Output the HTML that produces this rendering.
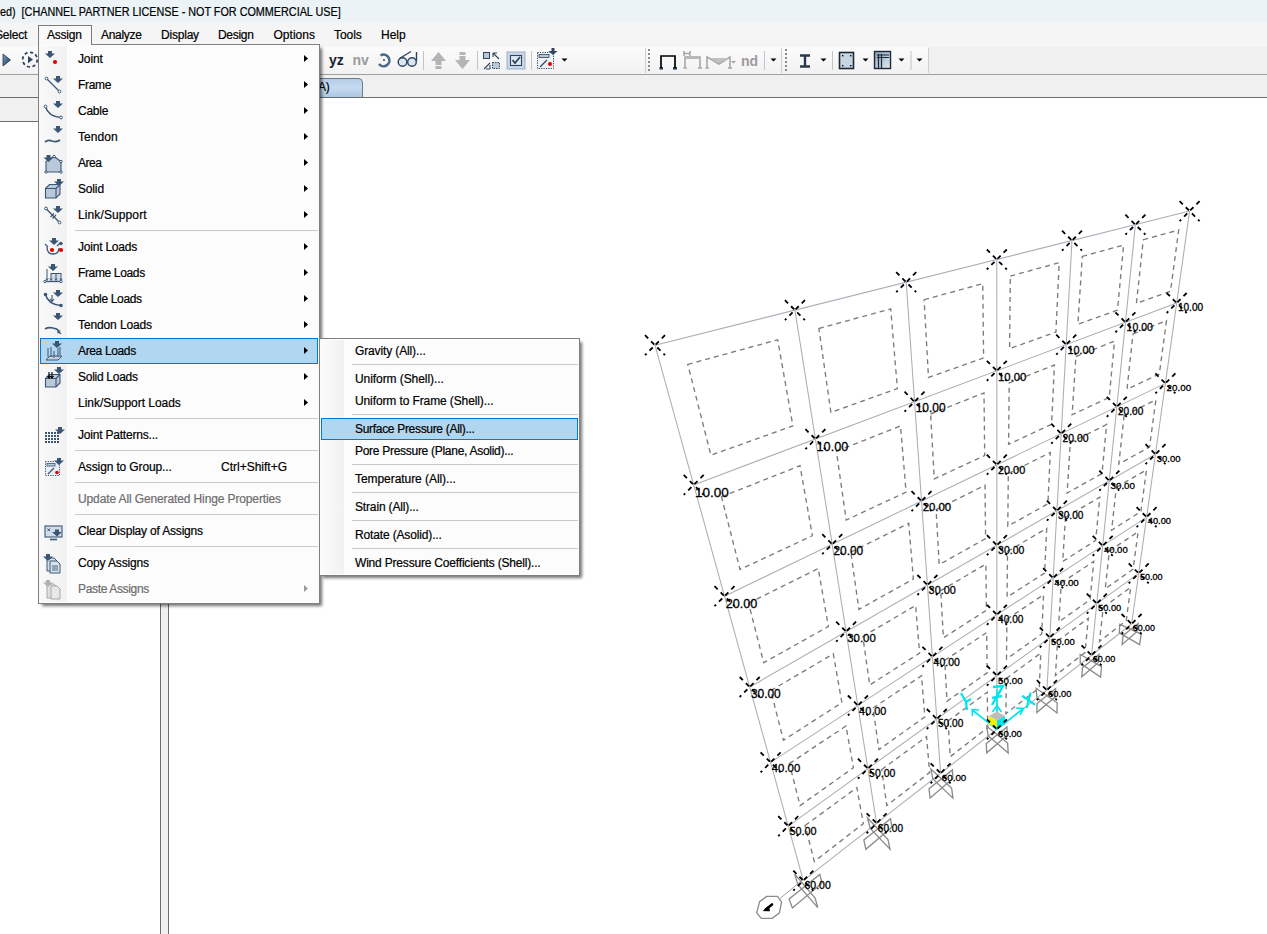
<!DOCTYPE html><html><head><meta charset="utf-8"><style>
*{box-sizing:border-box}
html,body{margin:0;padding:0}
body{width:1267px;height:934px;overflow:hidden;position:relative;background:#fff;font-family:"Liberation Sans",sans-serif;font-size:12px;color:#000}
.a{position:absolute}
.t{position:absolute;white-space:nowrap;line-height:14px;-webkit-text-stroke:0.2px currentColor;letter-spacing:-0.2px}
</style></head><body>
<div class="a" style="left:0;top:0;width:1267px;height:23px;background:#ebf3f7"></div>
<div class="t" style="left:0px;top:5px;font-size:12px;letter-spacing:0;transform:scaleX(0.9);transform-origin:0 0">ed)&nbsp;&nbsp;[CHANNEL PARTNER LICENSE - NOT FOR COMMERCIAL USE]</div>
<div class="a" style="left:0;top:23px;width:1267px;height:24px;background:#f5f5f5"></div>
<div class="t" style="left:-5px;top:28px;letter-spacing:-0.2px">Select</div>
<div class="t" style="left:101px;top:28px;letter-spacing:-0.286px">Analyze</div>
<div class="t" style="left:161px;top:28px;letter-spacing:-0.208px">Display</div>
<div class="t" style="left:218px;top:28px;letter-spacing:-0.293px">Design</div>
<div class="t" style="left:273.5px;top:28px;letter-spacing:0.02px">Options</div>
<div class="t" style="left:334px;top:28px;letter-spacing:-0.043px">Tools</div>
<div class="t" style="left:381px;top:28px;letter-spacing:-0.022px">Help</div>
<div class="a" style="left:38px;top:25px;width:54px;height:21px;background:#f9f9f9;border:1px solid #7a7a7a;border-bottom:none"></div>
<div class="t" style="left:47px;top:28px;letter-spacing:-0.222px">Assign</div>
<svg class="a" style="left:0;top:0;overflow:visible" width="1267" height="80">
<defs><linearGradient id="tg" x1="0" y1="0" x2="0" y2="1"><stop offset="0" stop-color="#fbfbfb"/><stop offset="1" stop-color="#f2f2f2"/></linearGradient><linearGradient id="bl" x1="0" y1="0" x2="1" y2="1"><stop offset="0" stop-color="#7d9ec0"/><stop offset="1" stop-color="#1e3552"/></linearGradient></defs>
<rect x="0" y="47" width="1267" height="27" fill="#f0f0f0"/>
<rect x="0" y="47" width="645" height="27" fill="url(#tg)"/><rect x="645" y="48" width="1" height="25" fill="#cfcfcf"/>
<rect x="646" y="47" width="135" height="27" fill="url(#tg)"/><rect x="781" y="48" width="1" height="25" fill="#cfcfcf"/>
<rect x="782" y="47" width="146" height="27" fill="url(#tg)"/><rect x="928" y="48" width="1" height="25" fill="#cfcfcf"/>
<rect x="648" y="49" width="2" height="2" fill="#8a8a8a"/><rect x="648" y="53" width="2" height="2" fill="#8a8a8a"/><rect x="648" y="57" width="2" height="2" fill="#8a8a8a"/><rect x="648" y="61" width="2" height="2" fill="#8a8a8a"/><rect x="648" y="65" width="2" height="2" fill="#8a8a8a"/><rect x="648" y="69" width="2" height="2" fill="#8a8a8a"/><rect x="785" y="49" width="2" height="2" fill="#8a8a8a"/><rect x="785" y="53" width="2" height="2" fill="#8a8a8a"/><rect x="785" y="57" width="2" height="2" fill="#8a8a8a"/><rect x="785" y="61" width="2" height="2" fill="#8a8a8a"/><rect x="785" y="65" width="2" height="2" fill="#8a8a8a"/><rect x="785" y="69" width="2" height="2" fill="#8a8a8a"/>
<path d="M3,54L10.5,60L3,66Z" fill="url(#bl)" stroke="#1e3552" stroke-width=".8"/>
<circle cx="30" cy="59.6" r="7.3" fill="none" stroke="#2f4560" stroke-width="1.8" stroke-dasharray="3.2 2.5"/><path d="M28,56L33,59.6L28,63.3Z" fill="#2f4560"/>
<text x="329" y="65" font-family="Liberation Sans" font-weight="bold" font-size="14" fill="#14222f">yz</text>
<text x="352.5" y="65" font-family="Liberation Sans" font-weight="bold" font-size="14" fill="#9a9a9a">nv</text>
<path d="M380.5,55.5 A5.8,5.8 0 1 1 379,64" fill="none" stroke="#4a6888" stroke-width="2.6"/><circle cx="384" cy="60" r="1" fill="#2f4560"/>
<circle cx="402.5" cy="62" r="4.3" fill="#dbe6f0" stroke="#2f4560" stroke-width="1.4"/><circle cx="412" cy="62" r="4.3" fill="#dbe6f0" stroke="#2f4560" stroke-width="1.4"/><path d="M399.5,58.5L411,51.5M416.5,52V61" stroke="#2f4560" stroke-width="1.4" fill="none"/>
<rect x="423" y="51" width="1" height="19" fill="#c4c4c4"/>
<path d="M431,61L438.5,52L446,61H441.5V65H435.5V61Z" fill="#b4b4b4"/><rect x="435.5" y="66" width="6" height="3" fill="#b4b4b4"/>
<path d="M455,60L462.5,69L470,60H465.5V56H459.5V60Z" fill="#b4b4b4"/><rect x="459.5" y="52" width="6" height="3" fill="#b4b4b4"/>
<rect x="477" y="51" width="1" height="19" fill="#c4c4c4"/>
<rect x="483.5" y="52.5" width="6" height="6" fill="#b8c8d8" stroke="#2f4560" stroke-width="1"/><rect x="492.5" y="62.5" width="7" height="6" fill="#b8c8d8" stroke="#2f4560" stroke-width="1" stroke-dasharray="1.5 1"/><path d="M493,53L499,59M493,53h4M493,53v4M484,69L490,63M490,69v-4M490,69h-4" stroke="#2f4560" stroke-width="1.1" fill="none"/>
<rect x="507" y="52" width="18" height="17" fill="#c9d9e8" stroke="#9ab0c6" stroke-width="1"/><rect x="510.5" y="55.5" width="11" height="10" fill="#dfe8f0" stroke="#2f4560" stroke-width="1.1"/><path d="M512.5,60L515,63L520,57" stroke="#2f4560" stroke-width="1.8" fill="none"/>
<rect x="531" y="51" width="1" height="19" fill="#c4c4c4"/>
<rect x="537.5" y="52.5" width="16" height="16" fill="#eef2f6" stroke="#2f4560" stroke-width="1" stroke-dasharray="1.2 1.2"/><rect x="539" y="54.5" width="10" height="3" fill="#b8c8d8" stroke="#2f4560" stroke-width=".8"/><path d="M540,67L547,60" stroke="#2f4560" stroke-width="1.3"/><circle cx="550" cy="64" r="2" fill="#e00000"/><path d="M551.5,48h3v3h3l-4.5,4l-4.5,-4h3z" fill="#2f4560"/>
<path d="M561.5,58.5h6l-3,3z" fill="#000"/>
<path d="M661,68V56H675V68M659.5,68H663M673,68H677" stroke="#000" stroke-width="1.7" fill="none"/><path d="M659.5,69.5H663M673,69.5H677" stroke="#5a8ac0" stroke-width="1"/>
<path d="M685,68V57H700V68M683.5,68H687M698,68H702M684,51V56M684,53.5H690M690,51V56" stroke="#a8a8a8" stroke-width="1.6" fill="none"/><rect x="685" y="56" width="15" height="3" fill="#b8b8b8"/>
<path d="M707,68V57L719,64L730,57V68M705.5,68H709M728,68H732" stroke="#a8a8a8" stroke-width="1.6" fill="none"/><path d="M709,58L719,63L729,58Z" fill="#c0c0c0"/><path d="M731,61h5l-2.5,2.5z" fill="#a0a0a0"/>
<text x="741" y="65.5" font-family="Liberation Sans" font-weight="bold" font-size="14" fill="#9c9c9c">nd</text>
<rect x="764" y="51" width="1" height="19" fill="#c4c4c4"/><path d="M770.5,58.5h6l-3,3z" fill="#000"/>
<path d="M800,55.5H810M805,55.5V66.5M800,66.5H810" stroke="#2a3a4c" stroke-width="2.4" fill="none"/>
<path d="M820.5,58.5h6l-3,3z" fill="#000"/><rect x="832" y="51" width="1" height="19" fill="#c4c4c4"/>
<rect x="839.5" y="52.5" width="14" height="16" fill="#c8d6e4" stroke="#1c2a38" stroke-width="1.6"/><rect x="842" y="55" width="1.4" height="1.4" fill="#000"/><rect x="850" y="55" width="1.4" height="1.4" fill="#000"/><rect x="842" y="65" width="1.4" height="1.4" fill="#000"/><rect x="850" y="65" width="1.4" height="1.4" fill="#000"/>
<path d="M862.5,58.5h6l-3,3z" fill="#000"/>
<defs><linearGradient id="gg" x1="0" y1="0" x2="1" y2="1"><stop offset="0" stop-color="#8aa0b6"/><stop offset="1" stop-color="#e4ebf2"/></linearGradient></defs><rect x="874.5" y="51.5" width="16" height="17" fill="url(#gg)" stroke="#1c2a38" stroke-width="1.4"/><path d="M877,55H889M877,57.5H889M878.5,54V68M881.5,54V68" stroke="#1c2a38" stroke-width="1.2" fill="none"/>
<path d="M898.5,58.5h6l-3,3z" fill="#000"/><rect x="910.5" y="51" width="1" height="19" fill="#c4c4c4"/><path d="M916.5,58.5h6l-3,3z" fill="#000"/>
</svg>
<div class="a" style="left:0;top:74px;width:1267px;height:1px;background:#a0a0a0"></div>
<div class="a" style="left:0;top:75px;width:1267px;height:22px;background:#f0f0f0"></div>
<div class="a" style="left:200px;top:78px;width:163px;height:20px;background:linear-gradient(#b4cde6,#c6dbef 45%,#a9c5e2);border:1px solid #6d7d8d;border-bottom:none;border-top-right-radius:5px"></div>
<div class="t" style="left:318px;top:80px">A)</div>
<div class="a" style="left:0;top:97px;width:1267px;height:1px;background:#6d6d6d"></div>
<div class="a" style="left:0;top:98px;width:160px;height:23px;background:#f0f0f0"></div>
<div class="a" style="left:0;top:121px;width:160px;height:1px;background:#6d6d6d"></div>
<div class="a" style="left:160px;top:98px;width:9px;height:836px;background:#f0f0f0;border-left:1px solid #6d6d6d;border-right:1px solid #6d6d6d"></div>
<svg width="1267" height="934" style="position:absolute;left:0;top:0">
<g stroke="#aaaeb6" stroke-width="1.05" fill="none"><polyline points="655.0,345.2 1189.6,211.1"/><polyline points="693.7,484.9 1176.7,303.0"/><polyline points="724.5,596.2 1165.4,383.4"/><polyline points="749.7,687.0 1155.5,454.2"/><polyline points="770.6,762.4 1146.6,517.1"/><polyline points="788.2,826.1 1138.7,573.4"/><polyline points="803.3,880.6 1131.6,624.0"/><polyline points="655.0,345.2 803.3,880.6"/><polyline points="794.9,310.1 876.6,823.3"/><polyline points="906.2,282.2 940.6,773.3"/><polyline points="996.8,259.5 996.9,729.3"/><polyline points="1072.0,240.6 1046.9,690.2"/><polyline points="1135.4,224.7 1091.5,655.3"/><polyline points="1189.6,211.1 1131.6,624.0"/></g>
<line x1="803" y1="879.5" x2="780.3" y2="898.3" stroke="#a0a0a0" stroke-width="1"/>
<g stroke="#7c7c7c" stroke-width="1.35" fill="none" stroke-dasharray="5 4"><polygon points="687.8,364.4 777.7,339.8 792.9,425.9 710.9,455.2"/><polygon points="721.5,496.8 800.0,465.7 812.4,535.7 740.0,569.5"/><polygon points="748.6,603.2 818.2,568.5 828.4,626.5 763.7,662.7"/><polygon points="770.8,690.6 833.3,653.9 841.9,702.7 783.4,740.2"/><polygon points="789.4,763.6 846.0,726.0 853.4,767.7 800.1,805.6"/><polygon points="805.1,825.5 856.9,787.6 863.3,823.7 814.3,861.5"/><polygon points="818.9,328.5 890.7,308.9 897.4,388.6 830.9,412.4"/><polygon points="836.4,451.3 900.5,425.9 906.1,492.1 846.2,520.0"/><polygon points="850.8,552.2 908.7,523.3 913.4,579.0 858.9,609.4"/><polygon points="862.8,636.5 915.6,605.5 919.6,653.1 869.7,685.0"/><polygon points="873.0,708.0 921.5,675.8 924.9,716.9 878.9,749.6"/><polygon points="881.7,769.5 926.6,736.7 929.6,772.6 886.8,805.5"/><polygon points="924.1,299.7 982.8,283.6 983.6,357.9 928.5,377.5"/><polygon points="930.6,414.0 984.0,392.9 984.7,455.5 934.3,478.9"/><polygon points="936.1,509.6 985.0,485.2 985.6,538.6 939.2,564.6"/><polygon points="940.7,590.7 985.9,564.1 986.4,610.3 943.4,637.8"/><polygon points="944.7,660.4 986.7,632.5 987.1,672.8 947.0,701.2"/><polygon points="948.1,720.9 987.3,692.2 987.7,727.7 950.2,756.7"/><polygon points="1010.3,276.1 1059.2,262.7 1055.9,332.1 1009.6,348.6"/><polygon points="1009.2,382.9 1054.4,365.0 1051.6,424.3 1008.6,444.3"/><polygon points="1008.3,473.5 1050.3,452.6 1047.9,503.8 1007.8,526.2"/><polygon points="1007.5,551.4 1046.7,528.4 1044.6,573.1 1007.1,597.1"/><polygon points="1006.9,619.1 1043.6,594.7 1041.7,634.0 1006.5,659.0"/><polygon points="1006.3,678.4 1040.8,653.1 1039.2,688.0 1005.9,713.6"/><polygon points="1082.3,256.4 1123.6,245.1 1117.5,310.1 1077.9,324.2"/><polygon points="1075.9,356.5 1114.5,341.2 1109.2,397.5 1072.1,414.7"/><polygon points="1070.3,442.6 1106.6,424.5 1102.0,473.5 1067.1,493.1"/><polygon points="1065.5,517.3 1099.8,497.2 1095.7,540.4 1062.7,561.5"/><polygon points="1061.3,582.9 1093.7,561.4 1090.1,599.7 1058.8,621.9"/><polygon points="1057.6,640.8 1088.3,618.3 1085.0,652.6 1055.4,675.5"/><polygon points="1143.3,239.7 1178.7,230.0 1170.5,291.2 1136.4,303.4"/><polygon points="1133.0,333.9 1166.5,320.6 1159.3,374.1 1127.0,389.2"/><polygon points="1124.1,415.7 1155.9,399.9 1149.5,447.0 1118.8,464.1"/><polygon points="1116.3,487.5 1146.5,469.8 1140.9,511.5 1111.6,530.2"/><polygon points="1109.4,550.9 1138.1,531.8 1133.1,569.1 1105.2,588.9"/><polygon points="1103.2,607.4 1130.7,587.3 1126.2,620.8 1099.5,641.4"/></g>
<g stroke="#8a8a8a" stroke-width="1.3" fill="none"><polygon points="789.1,898.9 819.8,874.4 822.0,883.0 792.4,908.0"/><polygon points="794.7,874.2 815.1,898.0 817.8,907.6 797.9,884.6"/><polygon points="863.8,840.0 890.6,818.7 891.8,827.3 865.9,849.2"/><polygon points="867.5,818.0 888.0,839.5 890.0,849.2 870.1,828.1"/><polygon points="929.0,788.7 952.4,769.9 952.9,778.5 930.1,798.0"/><polygon points="930.9,769.1 951.7,788.3 952.9,798.1 932.9,778.9"/><polygon points="986.3,743.5 1007.0,726.9 1007.0,735.4 986.7,752.8"/><polygon points="986.7,726.2 1007.6,743.1 1008.2,753.1 988.1,735.7"/><polygon points="1037.1,703.5 1055.6,688.6 1055.0,697.1 1036.9,712.6"/><polygon points="1036.1,688.3 1057.2,702.8 1057.0,712.9 1036.9,697.4"/><polygon points="1082.4,667.7 1099.0,654.4 1098.1,662.7 1081.8,676.8"/><polygon points="1080.2,654.5 1101.5,666.7 1100.6,677.0 1080.3,663.3"/><polygon points="1123.1,635.6 1138.1,623.6 1136.9,631.7 1122.1,644.5"/><polygon points="1119.8,624.3 1141.2,634.2 1139.6,644.6 1119.3,632.8"/></g>
<path d="M996.9,729.3 L997,689 M996.9,729.3 L1022,709.5 M996.9,729.3 L972.2,710" stroke="#00e5f0" stroke-width="1.6" fill="none"/><path d="M992.5,712 L997,705.5 L1001.5,712 M1016,708 L1023.5,708.5 L1020,715 M972.5,716 L972.2,709.5 L979,710" stroke="#00e5f0" stroke-width="1.6" fill="none"/><path d="M993,687 L1003,686 L992,705 M992,698 L1002,696" stroke="#00e5f0" stroke-width="2.4" fill="none"/><path d="M1024,694 L1033,707 M1033,694 L1024,707" stroke="#00e5f0" stroke-width="2.2" fill="none" transform="rotate(-20 1028 700)"/><path d="M961,693 L966,702 L971,699 M966,702 L967,710" stroke="#00e5f0" stroke-width="2.2" fill="none"/><path d="M989,716 L997,711.5 L1005,716 L997,720.5Z" fill="#bdbdbd"/><path d="M989,716 L997,720.5 L997,728.5 L989,724Z" fill="#f5f000"/><path d="M1005,716 L997,720.5 L997,728.5 L1005,724Z" fill="#00e5f0"/>
<g stroke="#000" stroke-width="1.8" fill="none" stroke-dasharray="4.5 4.2"><path d="M645.0,335.2L665.0,355.2M665.0,335.2L645.0,355.2"/><path d="M683.7,474.9L703.7,494.9M703.7,474.9L683.7,494.9"/><path d="M714.5,586.2L734.5,606.2M734.5,586.2L714.5,606.2"/><path d="M739.7,677.0L759.7,697.0M759.7,677.0L739.7,697.0"/><path d="M760.6,752.4L780.6,772.4M780.6,752.4L760.6,772.4"/><path d="M778.2,816.1L798.2,836.1M798.2,816.1L778.2,836.1"/><path d="M793.3,870.6L813.3,890.6M813.3,870.6L793.3,890.6"/><path d="M784.9,300.1L804.9,320.1M804.9,300.1L784.9,320.1"/><path d="M805.4,429.1L825.4,449.1M825.4,429.1L805.4,449.1"/><path d="M822.2,534.2L842.2,554.2M842.2,534.2L822.2,554.2"/><path d="M836.1,621.6L856.1,641.6M856.1,621.6L836.1,641.6"/><path d="M847.9,695.5L867.9,715.5M867.9,695.5L847.9,715.5"/><path d="M857.9,758.6L877.9,778.6M877.9,758.6L857.9,778.6"/><path d="M866.6,813.3L886.6,833.3M886.6,813.3L866.6,833.3"/><path d="M896.2,272.2L916.2,292.2M916.2,272.2L896.2,292.2"/><path d="M904.5,391.7L924.5,411.7M924.5,391.7L904.5,411.7"/><path d="M911.5,491.1L931.5,511.1M931.5,491.1L911.5,511.1"/><path d="M917.4,575.0L937.4,595.0M937.4,575.0L917.4,595.0"/><path d="M922.4,646.8L942.4,666.8M942.4,646.8L922.4,666.8"/><path d="M926.8,709.0L946.8,729.0M946.8,709.0L926.8,729.0"/><path d="M930.6,763.3L950.6,783.3M950.6,763.3L930.6,783.3"/><path d="M986.8,249.5L1006.8,269.5M1006.8,249.5L986.8,269.5"/><path d="M986.8,360.8L1006.8,380.8M1006.8,360.8L986.8,380.8"/><path d="M986.8,454.7L1006.8,474.7M1006.8,454.7L986.8,474.7"/><path d="M986.9,535.2L1006.9,555.2M1006.9,535.2L986.9,555.2"/><path d="M986.9,604.8L1006.9,624.8M1006.9,604.8L986.9,624.8"/><path d="M986.9,665.6L1006.9,685.6M1006.9,665.6L986.9,685.6"/><path d="M986.9,719.3L1006.9,739.3M1006.9,719.3L986.9,739.3"/><path d="M1062.0,230.6L1082.0,250.6M1082.0,230.6L1062.0,250.6"/><path d="M1056.2,334.6L1076.2,354.6M1076.2,334.6L1056.2,354.6"/><path d="M1051.2,423.7L1071.2,443.7M1071.2,423.7L1051.2,443.7"/><path d="M1046.9,500.7L1066.9,520.7M1066.9,500.7L1046.9,520.7"/><path d="M1043.1,568.1L1063.1,588.1M1063.1,568.1L1043.1,588.1"/><path d="M1039.8,627.5L1059.8,647.5M1059.8,627.5L1039.8,647.5"/><path d="M1036.9,680.2L1056.9,700.2M1056.9,680.2L1036.9,700.2"/><path d="M1125.4,214.7L1145.4,234.7M1145.4,214.7L1125.4,234.7"/><path d="M1115.4,312.3L1135.4,332.3M1135.4,312.3L1115.4,332.3"/><path d="M1106.8,396.8L1126.8,416.8M1126.8,396.8L1106.8,416.8"/><path d="M1099.3,470.7L1119.3,490.7M1119.3,470.7L1099.3,490.7"/><path d="M1092.7,535.8L1112.7,555.8M1112.7,535.8L1092.7,555.8"/><path d="M1086.8,593.6L1106.8,613.6M1106.8,593.6L1086.8,613.6"/><path d="M1081.5,645.3L1101.5,665.3M1101.5,645.3L1081.5,665.3"/><path d="M1179.6,201.1L1199.6,221.1M1199.6,201.1L1179.6,221.1"/><path d="M1166.7,293.0L1186.7,313.0M1186.7,293.0L1166.7,313.0"/><path d="M1155.4,373.4L1175.4,393.4M1175.4,373.4L1155.4,393.4"/><path d="M1145.5,444.2L1165.5,464.2M1165.5,444.2L1145.5,464.2"/><path d="M1136.6,507.1L1156.6,527.1M1156.6,507.1L1136.6,527.1"/><path d="M1128.7,563.4L1148.7,583.4M1148.7,563.4L1128.7,583.4"/><path d="M1121.6,614.0L1141.6,634.0M1141.6,614.0L1121.6,634.0"/></g>
<g font-family="Liberation Sans" fill="#000" stroke="#000" stroke-width="0.3"><text x="694.9" y="497.4" font-size="13.49">10.00</text><text x="725.7" y="607.7" font-size="12.65">20.00</text><text x="750.9" y="697.6" font-size="11.95">30.00</text><text x="771.8" y="772.3" font-size="11.38">40.00</text><text x="789.4" y="835.4" font-size="10.89">50.00</text><text x="804.5" y="889.3" font-size="10.48">60.00</text><text x="816.6" y="450.5" font-size="12.64">10.00</text><text x="833.4" y="554.8" font-size="11.95">20.00</text><text x="847.3" y="641.5" font-size="11.37">30.00</text><text x="859.1" y="714.7" font-size="10.89">40.00</text><text x="869.1" y="777.4" font-size="10.47">50.00</text><text x="877.8" y="831.6" font-size="10.11">60.00</text><text x="915.7" y="412.3" font-size="11.94">10.00</text><text x="922.7" y="511.0" font-size="11.37">20.00</text><text x="928.6" y="594.3" font-size="10.88">30.00</text><text x="933.6" y="665.6" font-size="10.47">40.00</text><text x="938.0" y="727.3" font-size="10.11">50.00</text><text x="941.8" y="781.2" font-size="9.80">60.00</text><text x="998.0" y="380.6" font-size="11.36">10.00</text><text x="998.0" y="474.0" font-size="10.88">20.00</text><text x="998.1" y="553.9" font-size="10.47">30.00</text><text x="998.1" y="623.1" font-size="10.11">40.00</text><text x="998.1" y="683.5" font-size="9.79">50.00</text><text x="998.1" y="736.8" font-size="9.52">60.00</text><text x="1067.4" y="353.9" font-size="10.88">10.00</text><text x="1062.4" y="442.4" font-size="10.46">20.00</text><text x="1058.1" y="519.0" font-size="10.10">30.00</text><text x="1054.3" y="586.0" font-size="9.79">40.00</text><text x="1051.0" y="645.0" font-size="9.52">50.00</text><text x="1048.1" y="697.4" font-size="9.27">60.00</text><text x="1126.6" y="331.0" font-size="10.46">10.00</text><text x="1118.0" y="415.1" font-size="10.10">20.00</text><text x="1110.5" y="488.6" font-size="9.79">30.00</text><text x="1103.9" y="553.3" font-size="9.51">40.00</text><text x="1098.0" y="610.8" font-size="9.27">50.00</text><text x="1092.7" y="662.3" font-size="9.05">60.00</text><text x="1177.9" y="311.3" font-size="10.10">10.00</text><text x="1166.6" y="391.2" font-size="9.79">20.00</text><text x="1156.7" y="461.7" font-size="9.51">30.00</text><text x="1147.8" y="524.3" font-size="9.27">40.00</text><text x="1139.9" y="580.3" font-size="9.05">50.00</text><text x="1132.8" y="630.7" font-size="8.85">60.00</text></g>
<polygon points="766.6,896.4 777.5,896.4 781.6,902.2 779.4,912.8 772.2,918.3 761.3,918.3 756.7,912.8 759.6,901.7" fill="#fff" stroke="#8c8c8c" stroke-width="1.3"/>
<path d="M772,904.5 L766,909.2" stroke="#000" stroke-width="2.6" stroke-linecap="round"/><path d="M763.5,910.6 L768.5,906.5 L769.5,910.8Z" fill="#000" stroke="#000" stroke-width="1"/>
</svg>
<div class="a" style="left:38px;top:44px;width:282px;height:560px;background:#fcfcfc;border:1px solid #7f7f7f;box-shadow:3px 3px 3px -1px rgba(0,0,0,0.55)"></div>
<div class="a" style="left:39px;top:46px;width:28px;height:556px;background:linear-gradient(90deg,#f9f9f9,#f1f1f1)"></div>
<div class="a" style="left:39px;top:44px;width:52px;height:1px;background:#f9f9f9"></div>
<svg class="a" style="left:44px;top:51px;overflow:visible" width="18" height="18"><path d="M4,0h4v2.5h3l-5,4.5l-5,-4.5h3z" fill="#3b5675"/><circle cx="11" cy="11" r="2.1" fill="#e00000"/></svg>
<div class="t" style="left:78px;top:52px;color:#000;letter-spacing:-0.132px">Joint</div>
<svg class="a" style="left:304px;top:55px" width="5" height="8"><path d="M0,0L4,3.5L0,7Z" fill="#000"/></svg>
<svg class="a" style="left:44px;top:77px;overflow:visible" width="18" height="18"><path d="M2.5,1.5L15.5,14.5" stroke="#3b5675" stroke-width="1.3"/><circle cx="2.5" cy="1.5" r="1.4" fill="#fff" stroke="#3b5675" stroke-width="1"/><circle cx="15.5" cy="14.5" r="1.4" fill="#fff" stroke="#3b5675" stroke-width="1"/><path d="M12,-1h4v2.5h3l-5,4.5l-5,-4.5h3z" fill="#3b5675"/></svg>
<div class="t" style="left:78px;top:78px;color:#000;letter-spacing:-0.334px">Frame</div>
<svg class="a" style="left:304px;top:81px" width="5" height="8"><path d="M0,0L4,3.5L0,7Z" fill="#000"/></svg>
<svg class="a" style="left:44px;top:103px;overflow:visible" width="18" height="18"><path d="M1.5,3.5Q4,13.5 17,14.5" stroke="#3b5675" stroke-width="1.4" fill="none"/><circle cx="1.5" cy="3.5" r="1.4" fill="#fff" stroke="#3b5675" stroke-width="1"/><circle cx="17" cy="14.5" r="1.4" fill="#fff" stroke="#3b5675" stroke-width="1"/><path d="M12,-2h4v2.5h3l-5,4.5l-5,-4.5h3z" fill="#3b5675"/></svg>
<div class="t" style="left:78px;top:104px;color:#000;letter-spacing:-0.252px">Cable</div>
<svg class="a" style="left:304px;top:107px" width="5" height="8"><path d="M0,0L4,3.5L0,7Z" fill="#000"/></svg>
<svg class="a" style="left:44px;top:129px;overflow:visible" width="18" height="18"><path d="M1,13Q4,10.5 8,12Q13,13.5 16,11" stroke="#3b5675" stroke-width="1.8" fill="none"/><path d="M12,-3h4v2.5h3l-5,4.5l-5,-4.5h3z" fill="#3b5675"/></svg>
<div class="t" style="left:78px;top:130px;color:#000;letter-spacing:0.037px">Tendon</div>
<svg class="a" style="left:304px;top:133px" width="5" height="8"><path d="M0,0L4,3.5L0,7Z" fill="#000"/></svg>
<svg class="a" style="left:44px;top:155px;overflow:visible" width="18" height="18"><path d="M2,17V6.5L10,1.5L17,6.5V17Z" fill="#b9c9d9" stroke="#3b5675" stroke-width="1.1"/><circle cx="2" cy="17" r="1.2" fill="#fff" stroke="#3b5675" stroke-width="1"/><circle cx="17" cy="17" r="1.2" fill="#fff" stroke="#3b5675" stroke-width="1"/><circle cx="17" cy="6.5" r="1.2" fill="#fff" stroke="#3b5675" stroke-width="1"/><circle cx="10" cy="1.5" r="1.2" fill="#fff" stroke="#3b5675" stroke-width="1"/><path d="M2.5,0h4v2.5h3l-5,4.5l-5,-4.5h3z" fill="#3b5675"/></svg>
<div class="t" style="left:78px;top:156px;color:#000;letter-spacing:-0.465px">Area</div>
<svg class="a" style="left:304px;top:159px" width="5" height="8"><path d="M0,0L4,3.5L0,7Z" fill="#000"/></svg>
<svg class="a" style="left:44px;top:181px;overflow:visible" width="18" height="18"><path d="M1.5,7.5L5.5,3.5H16V13L12,17H1.5Z" fill="#b9c9d9" stroke="#3b5675" stroke-width="1.1"/><path d="M1.5,7.5H12V17M12,7.5L16,3.5" stroke="#3b5675" stroke-width="1.1" fill="none"/><path d="M13,-2h4v2.5h3l-5,4.5l-5,-4.5h3z" fill="#3b5675"/></svg>
<div class="t" style="left:78px;top:182px;color:#000;letter-spacing:-0.157px">Solid</div>
<svg class="a" style="left:304px;top:185px" width="5" height="8"><path d="M0,0L4,3.5L0,7Z" fill="#000"/></svg>
<svg class="a" style="left:44px;top:207px;overflow:visible" width="18" height="18"><path d="M2,1.5L15.5,15.5" stroke="#3b5675" stroke-width="1.3"/><path d="M6.5,10L10,6.5M8.5,11.5L12,8" stroke="#3b5675" stroke-width="1.1"/><circle cx="2" cy="1.5" r="1.4" fill="#fff" stroke="#3b5675" stroke-width="1"/><circle cx="15.5" cy="15.5" r="1.4" fill="#fff" stroke="#3b5675" stroke-width="1"/><path d="M12,-1h4v2.5h3l-5,4.5l-5,-4.5h3z" fill="#3b5675"/></svg>
<div class="t" style="left:78px;top:208px;color:#000;letter-spacing:0.109px">Link/Support</div>
<svg class="a" style="left:304px;top:211px" width="5" height="8"><path d="M0,0L4,3.5L0,7Z" fill="#000"/></svg>
<div class="a" style="left:75px;top:230px;width:243px;height:1px;background:#cacaca"></div>
<svg class="a" style="left:44px;top:239px;overflow:visible" width="18" height="18"><path d="M8,-1h4v2.5h3l-5,4.5l-5,-4.5h3z" fill="#3b5675"/><path d="M3,8Q3,15 9,15Q15,15 15,9" stroke="#3b5675" stroke-width="1.3" fill="none"/><path d="M1,5l3,3M13,7l3,-3" stroke="#3b5675" stroke-width="1.2"/><circle cx="8" cy="11" r="2.1" fill="#e00000"/><circle cx="17" cy="11" r="2.1" fill="#e00000"/><circle cx="17" cy="4.5" r="1.7" fill="#3b5675"/></svg>
<div class="t" style="left:78px;top:240px;color:#000;letter-spacing:-0.217px">Joint Loads</div>
<svg class="a" style="left:304px;top:243px" width="5" height="8"><path d="M0,0L4,3.5L0,7Z" fill="#000"/></svg>
<svg class="a" style="left:44px;top:265px;overflow:visible" width="18" height="18"><path d="M7,8.5H17V16H7Z" fill="#d4dde6"/><path d="M3,4V15M7,8V15M12,8V15M17,8V15M7,8.5H17" stroke="#3b5675" stroke-width="1" fill="none"/><path d="M1.8,13.5l1.2,2l1.2,-2M5.8,13.5l1.2,2l1.2,-2M10.8,13.5l1.2,2l1.2,-2M15.8,13.5l1.2,2l1.2,-2" stroke="#3b5675" stroke-width=".9" fill="none"/><path d="M1,16.5H17" stroke="#3b5675" stroke-width="1.3"/><circle cx="1" cy="16.5" r="1.2" fill="#fff" stroke="#3b5675" stroke-width="1"/><circle cx="17" cy="16.5" r="1.2" fill="#fff" stroke="#3b5675" stroke-width="1"/><path d="M7,-1h4v2.5h3l-5,4.5l-5,-4.5h3z" fill="#3b5675"/></svg>
<div class="t" style="left:78px;top:266px;color:#000;letter-spacing:-0.355px">Frame Loads</div>
<svg class="a" style="left:304px;top:269px" width="5" height="8"><path d="M0,0L4,3.5L0,7Z" fill="#000"/></svg>
<svg class="a" style="left:44px;top:291px;overflow:visible" width="18" height="18"><path d="M1.5,3.5Q4,13.5 17,14.5" stroke="#3b5675" stroke-width="1.5" fill="none"/><circle cx="1.5" cy="3.5" r="1.8" fill="#3b5675"/><circle cx="17" cy="14.5" r="1.8" fill="#3b5675"/><path d="M8,4V10M6,8l2,2.5l2,-2.5" stroke="#3b5675" stroke-width="1.1" fill="none"/><path d="M12,-1h4v2.5h3l-5,4.5l-5,-4.5h3z" fill="#3b5675"/></svg>
<div class="t" style="left:78px;top:292px;color:#000;letter-spacing:-0.326px">Cable Loads</div>
<svg class="a" style="left:304px;top:295px" width="5" height="8"><path d="M0,0L4,3.5L0,7Z" fill="#000"/></svg>
<svg class="a" style="left:44px;top:317px;overflow:visible" width="18" height="18"><path d="M1,12Q4,10 9,11Q13,11.5 15,14" stroke="#3b5675" stroke-width="1.6" fill="none"/><path d="M14,14l3,3M14,14h2.5M14,14v2.5" stroke="#3b5675" stroke-width="1.1" fill="none"/><path d="M12,-4h4v2.5h3l-5,4.5l-5,-4.5h3z" fill="#3b5675"/></svg>
<div class="t" style="left:78px;top:318px;color:#000;letter-spacing:-0.117px">Tendon Loads</div>
<svg class="a" style="left:304px;top:321px" width="5" height="8"><path d="M0,0L4,3.5L0,7Z" fill="#000"/></svg>
<div class="a" style="left:40px;top:338px;width:278px;height:26px;background:#b1d6f0;border:1px solid #0078d7"></div>
<svg class="a" style="left:44px;top:343px;overflow:visible" width="18" height="18"><path d="M2,17L6,13H18L14,17Z" fill="#c8d0d8" stroke="#3b5675" stroke-width="1"/><path d="M4,5V14M7,4V14M10,8V15M14,5V14M16,4V12" stroke="#3b5675" stroke-width="1"/><path d="M11,-2h4v2.5h3l-5,4.5l-5,-4.5h3z" fill="#3b5675"/></svg>
<div class="t" style="left:78px;top:344px;color:#000;letter-spacing:-0.359px">Area Loads</div>
<svg class="a" style="left:304px;top:347px" width="5" height="8"><path d="M0,0L4,3.5L0,7Z" fill="#000"/></svg>
<svg class="a" style="left:44px;top:369px;overflow:visible" width="18" height="18"><path d="M1.5,9.5L5.5,5.5H16V14L12,18H1.5Z" fill="#b9c9d9" stroke="#3b5675" stroke-width="1.1"/><path d="M1.5,9.5H12V18M12,9.5L16,5.5" stroke="#3b5675" stroke-width="1.1" fill="none"/><path d="M5,3V9M8,3V9M3.5,7l1.5,2l1.5,-2M6.5,7l1.5,2l1.5,-2" stroke="#000" stroke-width="1.1" fill="none"/><path d="M13,-2h4v2.5h3l-5,4.5l-5,-4.5h3z" fill="#3b5675"/></svg>
<div class="t" style="left:78px;top:370px;color:#000;letter-spacing:-0.274px">Solid Loads</div>
<svg class="a" style="left:304px;top:373px" width="5" height="8"><path d="M0,0L4,3.5L0,7Z" fill="#000"/></svg>

<div class="t" style="left:78px;top:396px;color:#000;letter-spacing:-0.034px">Link/Support Loads</div>
<svg class="a" style="left:304px;top:399px" width="5" height="8"><path d="M0,0L4,3.5L0,7Z" fill="#000"/></svg>
<div class="a" style="left:75px;top:418px;width:243px;height:1px;background:#cacaca"></div>
<svg class="a" style="left:44px;top:427px;overflow:visible" width="18" height="18"><rect x="1" y="5" width="2" height="2" fill="#3b5675"/><rect x="4" y="5" width="2" height="2" fill="#3b5675"/><rect x="7" y="5" width="2" height="2" fill="#3b5675"/><rect x="10" y="5" width="2" height="2" fill="#3b5675"/><rect x="13" y="5" width="2" height="2" fill="#3b5675"/><rect x="1" y="8" width="2" height="2" fill="#3b5675"/><rect x="4" y="8" width="2" height="2" fill="#3b5675"/><rect x="7" y="8" width="2" height="2" fill="#3b5675"/><rect x="10" y="8" width="2" height="2" fill="#3b5675"/><rect x="13" y="8" width="2" height="2" fill="#3b5675"/><rect x="1" y="11" width="2" height="2" fill="#3b5675"/><rect x="4" y="11" width="2" height="2" fill="#3b5675"/><rect x="7" y="11" width="2" height="2" fill="#3b5675"/><rect x="10" y="11" width="2" height="2" fill="#3b5675"/><rect x="13" y="11" width="2" height="2" fill="#3b5675"/><rect x="1" y="14" width="2" height="2" fill="#3b5675"/><rect x="4" y="14" width="2" height="2" fill="#3b5675"/><rect x="7" y="14" width="2" height="2" fill="#3b5675"/><rect x="10" y="14" width="2" height="2" fill="#3b5675"/><rect x="13" y="14" width="2" height="2" fill="#3b5675"/><path d="M14,0h4v2.5h3l-5,4.5l-5,-4.5h3z" fill="#3b5675"/></svg>
<div class="t" style="left:78px;top:428px;color:#000;letter-spacing:-0.204px">Joint Patterns...</div>
<div class="a" style="left:75px;top:450px;width:243px;height:1px;background:#cacaca"></div>
<svg class="a" style="left:44px;top:459px;overflow:visible" width="18" height="18"><rect x="1.5" y="2.5" width="14" height="14" fill="#e8eef4" stroke="#3b5675" stroke-width="1" stroke-dasharray="1.2 1.2"/><rect x="3" y="4.5" width="8" height="2.5" fill="#b9c9d9" stroke="#3b5675" stroke-width=".8"/><path d="M4,15L10,9" stroke="#3b5675" stroke-width="1.3"/><circle cx="13" cy="13.5" r="1.8" fill="#e00000"/><path d="M13,-1h4v2.5h3l-5,4.5l-5,-4.5h3z" fill="#3b5675"/></svg>
<div class="t" style="left:78px;top:460px;color:#000;letter-spacing:-0.136px">Assign to Group...</div>
<div class="t" style="left:221px;top:460px;letter-spacing:0px">Ctrl+Shift+G</div>
<div class="a" style="left:75px;top:482px;width:243px;height:1px;background:#cacaca"></div>

<div class="t" style="left:78px;top:492px;color:#6d6d6d;letter-spacing:-0.121px">Update All Generated Hinge Properties</div>
<div class="a" style="left:75px;top:514px;width:243px;height:1px;background:#cacaca"></div>
<svg class="a" style="left:44px;top:523px;overflow:visible" width="18" height="18"><rect x="1" y="3" width="17" height="11" fill="#d0dce8" stroke="#3b5675" stroke-width="1.1"/><path d="M6,16.5H13" stroke="#3b5675" stroke-width="1.6"/><path d="M3.5,5.5l2.5,2.5M6,5.5l-2.5,2.5" stroke="#3b5675" stroke-width="1"/><path d="M11,6.5h4v2.5h3l-5,4.5l-5,-4.5h3z" fill="#3b5675"/></svg>
<div class="t" style="left:78px;top:524px;color:#000;letter-spacing:-0.187px">Clear Display of Assigns</div>
<div class="a" style="left:75px;top:546px;width:243px;height:1px;background:#cacaca"></div>
<svg class="a" style="left:44px;top:555px;overflow:visible" width="18" height="18"><path d="M3,3H10L13,6V16H3Z" fill="#d8e2ec" stroke="#3b5675" stroke-width="1"/><path d="M6,6H13L16,9V18H6Z" fill="#d8e2ec" stroke="#3b5675" stroke-width="1"/><path d="M8,11H14M8,13H14M8,15H14" stroke="#3b5675" stroke-width=".9"/><path d="M2,-1h4v2.5h3l-5,4.5l-5,-4.5h3z" fill="#3b5675"/></svg>
<div class="t" style="left:78px;top:556px;color:#000;letter-spacing:-0.15px">Copy Assigns</div>
<svg class="a" style="left:44px;top:581px;overflow:visible" width="18" height="18"><path d="M3,3H10L13,6V17H3Z" fill="#e0e0e0" stroke="#a8a8a8" stroke-width="1"/><path d="M7,5H13L16,8V18H7Z" fill="#e8e8e8" stroke="#a8a8a8" stroke-width="1"/><path d="M2,-1h4v2.5h3l-5,4.5l-5,-4.5h3z" fill="#b0b0b0"/></svg>
<div class="t" style="left:78px;top:582px;color:#6d6d6d;letter-spacing:-0.344px">Paste Assigns</div>
<svg class="a" style="left:304px;top:585px" width="5" height="8"><path d="M0,0L4,3.5L0,7Z" fill="#9a9a9a"/></svg>
<div class="a" style="left:319px;top:338px;width:261px;height:238px;background:#fcfcfc;border:1px solid #7f7f7f;box-shadow:3px 3px 3px -1px rgba(0,0,0,0.55)"></div>
<div class="a" style="left:320px;top:340px;width:24px;height:234px;background:linear-gradient(90deg,#fcfcfc,#f1f1f1)"></div>
<div class="t" style="left:355px;top:344px;letter-spacing:-0.129px">Gravity (All)...</div>
<div class="a" style="left:352px;top:364px;width:226px;height:1px;background:#cacaca"></div>
<div class="t" style="left:355px;top:372px;letter-spacing:-0.074px">Uniform (Shell)...</div>
<div class="t" style="left:355px;top:394px;letter-spacing:-0.11px">Uniform to Frame (Shell)...</div>
<div class="a" style="left:352px;top:414px;width:226px;height:1px;background:#cacaca"></div>
<div class="a" style="left:321px;top:418px;width:257px;height:22px;background:#b1d6f0;border:1px solid #0078d7"></div>
<div class="t" style="left:355px;top:422px;letter-spacing:-0.311px">Surface Pressure (All)...</div>
<div class="t" style="left:355px;top:444px;letter-spacing:-0.285px">Pore Pressure (Plane, Asolid)...</div>
<div class="a" style="left:352px;top:464px;width:226px;height:1px;background:#cacaca"></div>
<div class="t" style="left:355px;top:472px;letter-spacing:-0.057px">Temperature (All)...</div>
<div class="a" style="left:352px;top:492px;width:226px;height:1px;background:#cacaca"></div>
<div class="t" style="left:355px;top:500px;letter-spacing:-0.154px">Strain (All)...</div>
<div class="a" style="left:352px;top:520px;width:226px;height:1px;background:#cacaca"></div>
<div class="t" style="left:355px;top:528px;letter-spacing:-0.149px">Rotate (Asolid)...</div>
<div class="a" style="left:352px;top:548px;width:226px;height:1px;background:#cacaca"></div>
<div class="t" style="left:355px;top:556px;letter-spacing:-0.19px">Wind Pressure Coefficients (Shell)...</div>
</body></html>
